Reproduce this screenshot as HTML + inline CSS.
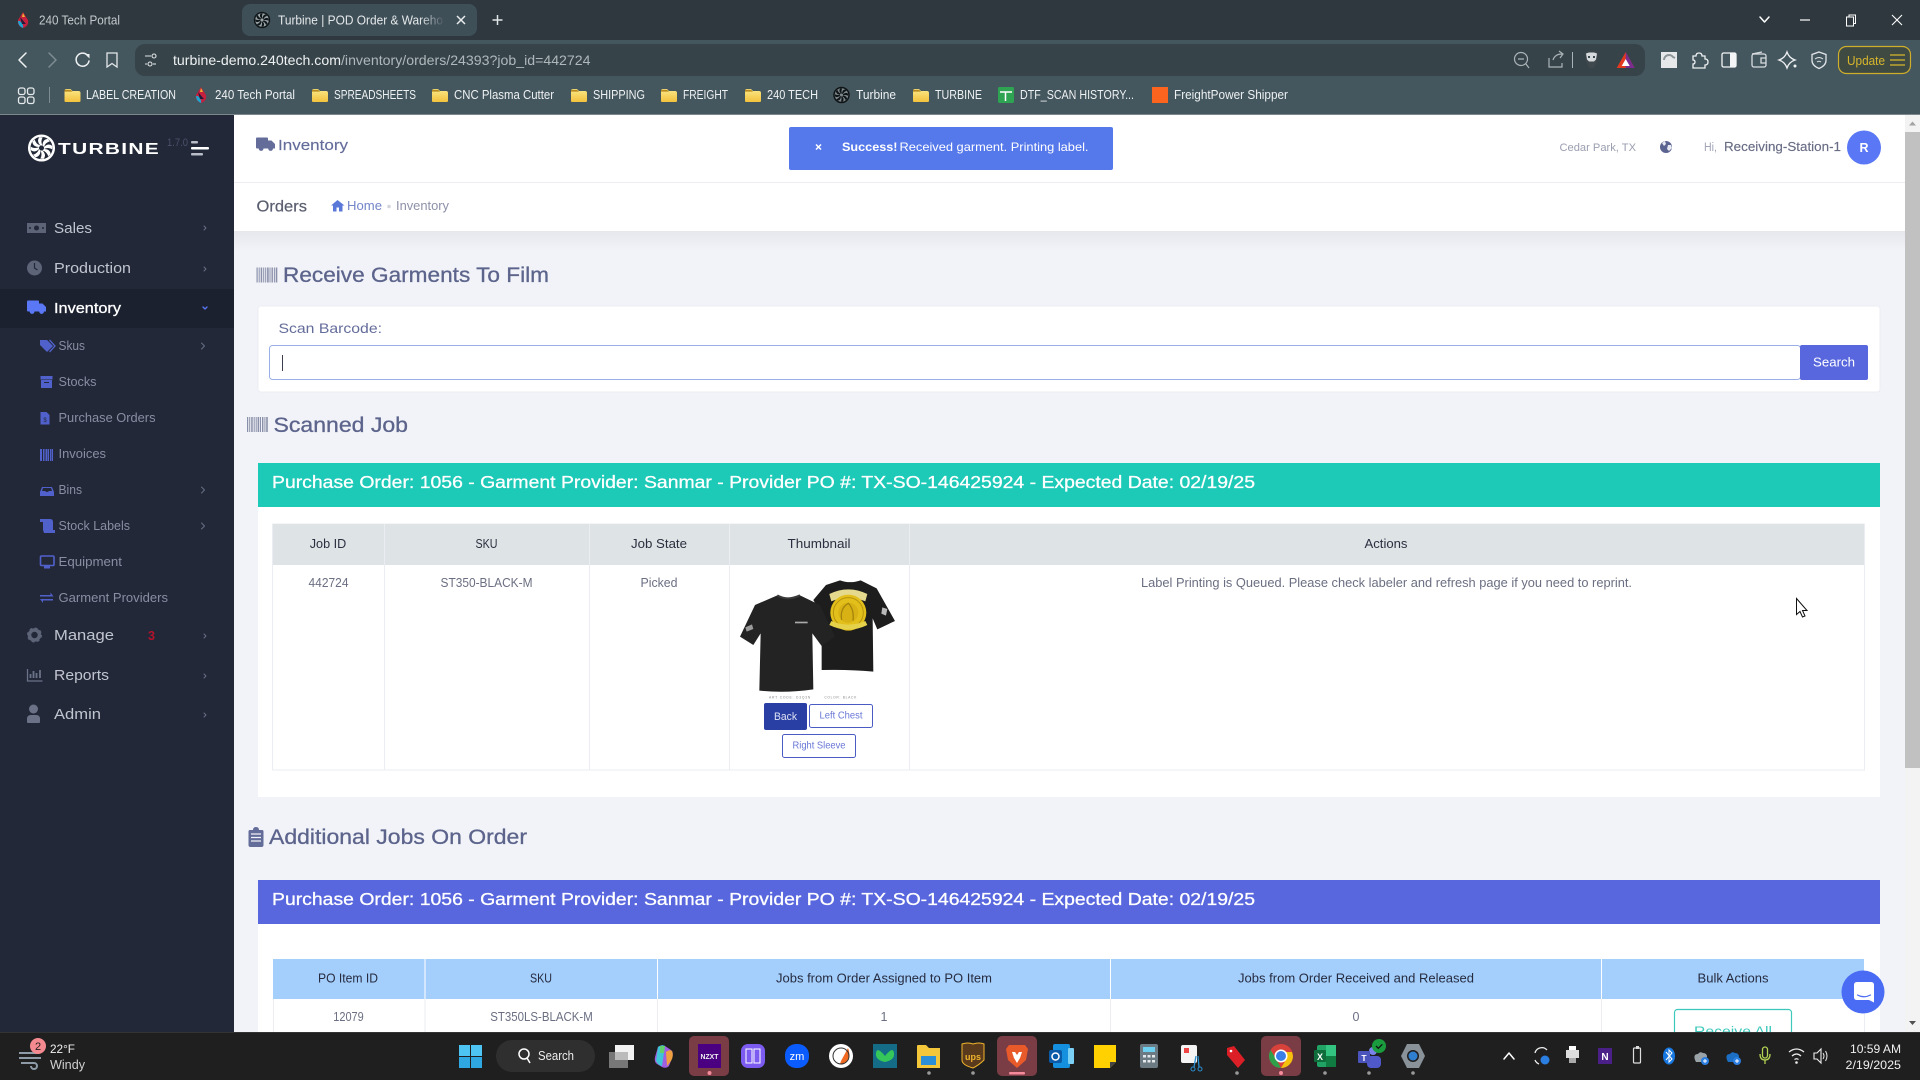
<!DOCTYPE html>
<html lang="en"><head><meta charset="utf-8"><title>Turbine | POD Order &amp; Warehouse</title>
<style>
html,body{margin:0;padding:0;width:1920px;height:1080px;overflow:hidden;background:#f2f3f8}
svg{display:block;position:absolute;left:0;top:0}
text{font-family:"Liberation Sans",sans-serif;white-space:pre}
.m{stroke:currentColor;stroke-width:.3px}
.n{fill:none;stroke-linecap:round;stroke-linejoin:round}
</style></head><body>
<svg width="1920" height="1080" viewBox="0 0 1920 1080" xmlns="http://www.w3.org/2000/svg">
<defs>
<linearGradient id="sh" x1="0" y1="0" x2="0" y2="1"><stop offset="0" stop-color="#e6e7ec"/><stop offset="1" stop-color="#f2f3f8"/></linearGradient>
<linearGradient id="fade" x1="0" y1="0" x2="1" y2="0"><stop offset="0" stop-color="#3f4f57" stop-opacity="0"/><stop offset="1" stop-color="#3f4f57"/></linearGradient>
<linearGradient id="fo" x1="0" y1="0" x2="0" y2="1"><stop offset="0" stop-color="#fbe88a"/><stop offset="1" stop-color="#f3c23c"/></linearGradient>
<g id="folder"><path d="M0 2q0-2 2-2h4l2 2h6q2 0 2 2v8q0 1-2 1H1q-1 0-1-1z" fill="url(#fo)"/><path d="M0 0.8h6l2 1.8H0z" fill="#b68a1f"/></g>
<g id="fan"><circle r="6" fill="none" stroke="currentColor" stroke-width="1.2"/><g fill="currentColor"><path id="bl" d="M-.5-1.2Q-2.600-3.400-1-5.300L.6-5.200Q-.6-3.300.5-1.200z"/><use href="#bl" transform="rotate(45)"/><use href="#bl" transform="rotate(90)"/><use href="#bl" transform="rotate(135)"/><use href="#bl" transform="rotate(180)"/><use href="#bl" transform="rotate(225)"/><use href="#bl" transform="rotate(270)"/><use href="#bl" transform="rotate(315)"/></g></g>
<g id="drop"><path d="M6 0Q9 5 11 8Q12 14 6 16Q0 14 1 8Q3 5 6 0z" fill="#c5213e"/><path d="M1 9Q1 14 6 16Q7 13 3 9z" fill="#1aa6d0"/><path d="M3 5L9 12L5 12z" fill="#241a3a"/><path d="M6 1L8 5L5 5z" fill="#f0b030"/></g>
<g id="bc" fill="currentColor"><rect x="0" width="1.2" height="15"/><rect x="2.2" width="1" height="15"/><rect x="4.2" width="1.5" height="15"/><rect x="6.7" width="1" height="15"/><rect x="8.7" width="1" height="15"/><rect x="10.6" width="1.6" height="15"/><rect x="13" width="1" height="15"/><rect x="15" width="1.4" height="15"/><rect x="17.4" width="1" height="15"/><rect x="19.2" width="1.6" height="15"/></g>
<g id="chev"><path d="M-1.500-3L1.500 0L-1.500 3" class="n" stroke="currentColor" stroke-width="1"/></g>
<g id="chevs"><path d="M-1-2L1 0L-1 2" class="n" stroke="currentColor" stroke-width="1"/></g>
<path id="truck" d="M0 1q0-1 1-1h10q1 0 1 1v2h3.500l3.500 3.500V11h-2a2.400 2.400 0 0 1-4.800 0H7.500a2.400 2.400 0 0 1-4.800 0H1q-1 0-1-1z"/>
</defs>

<!-- browser chrome -->
<rect width="1920" height="40" fill="#2e383e"/>
<rect y="40" width="1920" height="75" fill="#44565e"/>
<rect y="114" width="1920" height="1" fill="#7d888d"/>
<rect x="135" y="44" width="1510" height="32" rx="10" fill="#364349"/>
<rect x="242" y="4" width="235" height="32" rx="8" fill="#3f4f57"/>
<use href="#drop" transform="translate(17,12)"/>
<text x="39" y="24.500" font-size="12.500" fill="#c4cbce" textLength="81" lengthAdjust="spacingAndGlyphs">240 Tech Portal</text>
<g transform="translate(262,20) scale(1.25)" color="#10171a"><circle r="6.500" fill="#9aa4a8"/><use href="#fan"/></g>
<text x="278" y="24.500" font-size="12.500" fill="#e4e8ea" textLength="165" lengthAdjust="spacingAndGlyphs">Turbine | POD Order &amp; Wareho</text>
<rect x="420" y="10" width="25" height="20" fill="url(#fade)"/>
<path d="M457 16l8 8M465 16l-8 8" stroke="#e8ecee" stroke-width="1.500"/>
<path d="M497.500 15v10M492.500 20h10" stroke="#e0e5e7" stroke-width="1.500"/>
<path d="M1760 17l4.500 5 4.500-5" class="n" stroke="#fff" stroke-width="1.500"/>
<path d="M1800 20h10" stroke="#fff" stroke-width="1.200"/>
<rect x="1846.500" y="17" width="7" height="9" fill="none" stroke="#fff" stroke-width="1"/><path d="M1849 17v-2h6.500v8.500h-2" fill="none" stroke="#fff"/>
<path d="M1892 15l10 10M1902 15l-10 10" stroke="#fff" stroke-width="1.100"/>

<path d="M26 53l-7 7 7 7" class="n" stroke="#f0f2f3" stroke-width="1.500"/>
<path d="M49 53l7 7-7 7" class="n" stroke="#7f8d93" stroke-width="1.500"/>
<path d="M88 56a6.500 6.500 0 1 0 1 5" class="n" stroke="#eef1f2" stroke-width="1.500"/><path d="M85 54h4.500v4.500" fill="#eef1f2"/>
<path d="M107 53h10v14l-5-3.500-5 3.500z" fill="none" stroke="#e4e8ea" stroke-width="1.300"/>
<g fill="none" stroke="#dfe4e6" stroke-width="1.100"><path d="M145 56h6M145 64h2"/><circle cx="154" cy="56" r="2"/><circle cx="150" cy="64" r="2"/><path d="M153 64h3"/></g>
<text x="173" y="65" font-size="14" fill="#eef1f2" textLength="168" lengthAdjust="spacingAndGlyphs">turbine-demo.240tech.com</text>
<text x="341" y="65" font-size="14" fill="#aeb8bc" textLength="249.500" lengthAdjust="spacingAndGlyphs">/inventory/orders/24393?job_id=442724</text>

<g fill="none" stroke="#aab4b8" stroke-width="1.200"><circle cx="1521" cy="59" r="6.500"/><path d="M1518 59h6M1526 64l3 4"/><path d="M1549 58v9h13v-4M1553 60q2-6 9-6M1559 51l4 3-3 4"/></g>
<rect x="1572" y="52" width="1" height="16" fill="#aab4b8"/>
<path d="M1585 53l3-1.500h7l3 1.500-1 8-3 6.500h-5l-3-6.500z" fill="#3f484d"/><path d="M1586 53.500l3-1h5l3 1-1 6-2 2h-5l-2-2z" fill="#d6dadc"/><path d="M1588 56h2v2h-2zM1593 56h2v2h-2z" fill="#3b4a50"/>
<path d="M1625.700 52l9 16h-18z" fill="#e2391f"/><path d="M1625.700 52l9 16h-9z" fill="#7b2c8f"/><path d="M1625.700 59l4 7h-8z" fill="#fff"/>
<rect x="1661" y="52" width="16" height="16" fill="#e6e8e9"/><path d="M1664 60a5 5 0 0 1 9-3l2 1" fill="none" stroke="#8d9598" stroke-width="2"/>
<path d="M1693 56h3q0-3 3-3t3 3h3v3q3 0 3 3t-3 3v3h-12v-4q2 0 2-2t-2-2z" fill="none" stroke="#eef1f2" stroke-width="1.300"/>
<rect x="1722" y="53" width="14" height="14" rx="1.500" fill="none" stroke="#f3f5f6" stroke-width="1.300"/><rect x="1730" y="53" width="6" height="14" fill="#f3f5f6"/>
<rect x="1752" y="54" width="14" height="13" rx="2" fill="none" stroke="#d8dde0" stroke-width="1.300"/><path d="M1752 54l10-2M1766 58h-5v5h5" fill="none" stroke="#d8dde0" stroke-width="1.300"/>
<path d="M1787 52q2 6 8 8q-6 2-8 8q-2-6-8-8q6-2 8-8z" fill="none" stroke="#eef1f2" stroke-width="1.300"/><circle cx="1795" cy="66" r="1.500" fill="#eef1f2"/>
<path d="M1819 52l7 2.500v6q0 5-7 8q-7-3-7-8v-6z" fill="none" stroke="#e2e6e8" stroke-width="1.300"/><path d="M1815 59q4-3 8 0M1817 62q2-1.500 4 0" fill="none" stroke="#e2e6e8"/>
<rect x="1838.500" y="46.500" width="72" height="27" rx="8" fill="#3f4a43" stroke="#cfae2b" stroke-width="1.200"/>
<text x="1847" y="65" font-size="13" fill="#d8b62b" textLength="38" lengthAdjust="spacingAndGlyphs">Update</text>
<path d="M1890 55h15M1890 60h15M1890 65h15" stroke="#d8b62b" stroke-width="1.300"/>

<!-- bookmarks -->
<g fill="none" stroke="#e6eaec" stroke-width="1.300"><rect x="18.500" y="88" width="6.500" height="6.500" rx="2"/><rect x="27.500" y="88" width="6.500" height="6.500" rx="2"/><rect x="18.500" y="97" width="6.500" height="6.500" rx="2"/><rect x="27.500" y="97" width="6.500" height="6.500" rx="2"/></g>
<rect x="49" y="87" width="1" height="16" fill="#7f8d93"/>
<use href="#folder" transform="translate(64.500,89)"/><use href="#folder" transform="translate(312,89)"/><use href="#folder" transform="translate(432,89)"/><use href="#folder" transform="translate(571,89)"/><use href="#folder" transform="translate(661,89)"/><use href="#folder" transform="translate(745,89)"/><use href="#folder" transform="translate(913,89)"/>
<use href="#drop" transform="translate(195,87)"/>
<g font-size="12.500" fill="#eef1f2">
<text x="86" y="99" textLength="90" lengthAdjust="spacingAndGlyphs">LABEL CREATION</text>
<text x="215" y="99" textLength="80" lengthAdjust="spacingAndGlyphs">240 Tech Portal</text>
<text x="334" y="99" textLength="82" lengthAdjust="spacingAndGlyphs">SPREADSHEETS</text>
<text x="454" y="99" textLength="100" lengthAdjust="spacingAndGlyphs">CNC Plasma Cutter</text>
<text x="593" y="99" textLength="52" lengthAdjust="spacingAndGlyphs">SHIPPING</text>
<text x="683" y="99" textLength="45" lengthAdjust="spacingAndGlyphs">FREIGHT</text>
<text x="767" y="99" textLength="51" lengthAdjust="spacingAndGlyphs">240 TECH</text>
<text x="856" y="99" textLength="40" lengthAdjust="spacingAndGlyphs">Turbine</text>
<text x="935" y="99" textLength="47" lengthAdjust="spacingAndGlyphs">TURBINE</text>
<text x="1020" y="99" textLength="114" lengthAdjust="spacingAndGlyphs">DTF_SCAN HISTORY...</text>
<text x="1174" y="99" textLength="114" lengthAdjust="spacingAndGlyphs">FreightPower Shipper</text>
</g>
<g transform="translate(841.500,95) scale(1.250)" color="#0f1416"><circle r="6.500" fill="#7d888d"/><use href="#fan"/></g>
<rect x="998" y="87" width="16" height="16" rx="1.500" fill="#2ea352"/><path d="M1000 92h12M1005.500 92v9" stroke="#fff" stroke-width="1.500"/>
<rect x="1152" y="87" width="16" height="16" fill="#fb641e"/>

<!-- sidebar -->
<rect y="115" width="234" height="917" fill="#222838"/>
<rect y="289" width="234" height="39" fill="#1c2130"/>
<g transform="translate(41.500,148) scale(2.050)" color="#fff"><use href="#fan"/></g>
<text x="58" y="154" font-size="16" font-weight="700" fill="#fff" textLength="102" lengthAdjust="spacingAndGlyphs" letter-spacing="1">TURBINE</text>
<text x="167" y="146" font-size="11" fill="#4b5269" textLength="21" lengthAdjust="spacingAndGlyphs">1.7.0</text>
<rect x="191" y="141" width="7" height="2.500" rx="1" fill="#b9bdc8"/><rect x="191" y="147" width="18" height="2.500" rx="1" fill="#fff"/><rect x="191" y="153" width="12" height="2.500" rx="1" fill="#b9bdc8"/>

<rect x="27" y="223" width="19" height="10" fill="#5d6478"/><circle cx="36.500" cy="228" r="2.500" fill="#222838"/><circle cx="30" cy="228" r="1" fill="#222838"/><circle cx="43" cy="228" r="1" fill="#222838"/>
<circle cx="34.500" cy="268" r="7.500" fill="#5d6478"/><path d="M34.500 263v5l3 2" fill="none" stroke="#222838" stroke-width="1.200"/>
<use href="#truck" transform="translate(27,300.500)" fill="#5a78f5"/>
<circle cx="34.500" cy="635" r="5" fill="none" stroke="#5d6478" stroke-width="3.500"/><circle cx="34.500" cy="635" r="6.300" fill="none" stroke="#5d6478" stroke-width="2.400" stroke-dasharray="2.600 2.350"/>
<path d="M27.500 669v12h15" fill="none" stroke="#6b7287" stroke-width="1.300"/><path d="M30.500 678v-4M33.500 678v-7M36.500 678v-5M40 678v-8" stroke="#6b7287" stroke-width="1.800"/>
<circle cx="33.500" cy="709" r="4.500" fill="#6b7287"/><path d="M27 722v-3q0-4 4-4h5q4 0 4 4v3q0 1-1 1H28q-1 0-1-1z" fill="#6b7287"/>

<g font-size="15">
<text x="54" y="233" fill="#c1c5d0" textLength="38" lengthAdjust="spacingAndGlyphs">Sales</text>
<text x="54" y="273" fill="#c1c5d0" textLength="77" lengthAdjust="spacingAndGlyphs">Production</text>
<text x="54" y="313" fill="#fff" class="m" textLength="67" lengthAdjust="spacingAndGlyphs" style="color:#fff">Inventory</text>
<text x="54" y="640" fill="#c1c5d0" textLength="60" lengthAdjust="spacingAndGlyphs">Manage</text>
<text x="148" y="640" fill="#b5122c" font-weight="700" font-size="13" textLength="7" lengthAdjust="spacingAndGlyphs">3</text>
<text x="54" y="680" fill="#c1c5d0" textLength="55" lengthAdjust="spacingAndGlyphs">Reports</text>
<text x="54" y="719" fill="#c1c5d0" textLength="47" lengthAdjust="spacingAndGlyphs">Admin</text>
</g>
<g font-size="12.500" fill="#898ea2">
<text x="58.500" y="350" textLength="26.500" lengthAdjust="spacingAndGlyphs">Skus</text>
<text x="58.500" y="386" textLength="38" lengthAdjust="spacingAndGlyphs">Stocks</text>
<text x="58.500" y="422" textLength="97" lengthAdjust="spacingAndGlyphs">Purchase Orders</text>
<text x="58.500" y="458" textLength="47.500" lengthAdjust="spacingAndGlyphs">Invoices</text>
<text x="58.500" y="494" textLength="23.500" lengthAdjust="spacingAndGlyphs">Bins</text>
<text x="58.500" y="530" textLength="71.500" lengthAdjust="spacingAndGlyphs">Stock Labels</text>
<text x="58.500" y="566" textLength="63.500" lengthAdjust="spacingAndGlyphs">Equipment</text>
<text x="58.500" y="602" textLength="109.500" lengthAdjust="spacingAndGlyphs">Garment Providers</text>
</g>
<g fill="#5161cc">
<path d="M40 340h7l6 6-6 6-7-7z"/><path d="M49.500 340l5.500 6-5.500 6" fill="none" stroke="#5161cc" stroke-width="1.300"/>
<rect x="40.500" y="376" width="12" height="3.500"/><rect x="41" y="380" width="11" height="8"/><rect x="44" y="382" width="5" height="1" fill="#222838"/>
<path d="M40.500 412h6l3 3v9.500h-9z"/><text x="45" y="422" font-size="6" fill="#222838" text-anchor="middle">$</text>
<rect x="40" y="449" width="2" height="12"/><rect x="43" y="449" width="1.500" height="12"/><rect x="45.500" y="449" width="2" height="12"/><rect x="48" y="449" width="1" height="12"/><rect x="50" y="449" width="1.500" height="12"/><rect x="52" y="449" width="1" height="12"/>
<path d="M40 492l2-5h10l2 5v4H40z"/><path d="M43 488h8l1 3h-3q-2 2-4 0h-3z" fill="#222838"/>
<path d="M40 519h10q3 0 3 3v8h2v3H44l-1-3v-8h-3z"/>
<rect x="40.500" y="556" width="13.500" height="9.500" rx="1" fill="none" stroke="#5161cc" stroke-width="1.600"/><rect x="44" y="566" width="6" height="2.500"/>
<path d="M40 595h10.500v-2.500l3 4h-13.500zM53 600.500H43v2.500l-3-4h13z"/>
</g>
<g color="#6a7085"><use href="#chevs" transform="translate(205,228)"/><use href="#chevs" transform="translate(205,269)"/><use href="#chev" transform="translate(203,346)"/><use href="#chev" transform="translate(203,490)"/><use href="#chev" transform="translate(203,526)"/><use href="#chevs" transform="translate(205,636)"/><use href="#chevs" transform="translate(205,676)"/><use href="#chevs" transform="translate(205,715)"/></g>
<path d="M203 307l2 2 2-2" class="n" stroke="#5a78f5" stroke-width="1.300"/>

<!-- page header -->
<rect x="234" y="115" width="1671" height="116" fill="#fff"/>
<rect x="234" y="182" width="1671" height="1" fill="#ebedf2"/>
<rect x="234" y="231" width="1671" height="20" fill="url(#sh)"/>
<use href="#truck" transform="translate(256,137.500)" fill="#646c9a"/>
<text x="278" y="150" font-size="15" fill="#646c9a" textLength="70" lengthAdjust="spacingAndGlyphs" class="m" style="color:#646c9a;stroke-width:.15">Inventory</text>
<text x="256.500" y="211.500" font-size="16" fill="#595d6e" textLength="50.500" lengthAdjust="spacingAndGlyphs" class="m" style="color:#595d6e;stroke-width:.2">Orders</text>
<path d="M337.500 200l-6.500 5.500h2v6h3.500v-4h2.500v4h3.500v-6h2z" fill="#5a78d8"/>
<text x="347" y="210" font-size="12.500" fill="#7485c9" textLength="35" lengthAdjust="spacingAndGlyphs">Home</text>
<circle cx="389" cy="206.500" r="1.800" fill="#d3d5dd"/>
<text x="396" y="210" font-size="12.500" fill="#8d91a8" textLength="53" lengthAdjust="spacingAndGlyphs">Inventory</text>

<!-- alert -->
<rect x="789" y="127" width="324" height="43" rx="2" fill="#5578eb"/>
<path d="M816 144.500l5 5M821 144.500l-5 5" stroke="#fff" stroke-width="1.500"/>
<text x="842" y="151" font-size="12" font-weight="700" fill="#fff" textLength="55.500" lengthAdjust="spacingAndGlyphs">Success!</text>
<text x="899.500" y="151" font-size="12" fill="#fff" textLength="189" lengthAdjust="spacingAndGlyphs">Received garment. Printing label.</text>

<!-- top right -->
<text x="1559.500" y="151" font-size="11" fill="#9a9eb0" textLength="76.500" lengthAdjust="spacingAndGlyphs">Cedar Park, TX</text>
<circle cx="1666" cy="147" r="6" fill="#5b6390"/><path d="M1662 143l3-2 1 3-2 2zM1668 145l3 0 1 3-3 3-2-2z" fill="#e8eaf2"/>
<text x="1704" y="151" font-size="11.500" fill="#a0a4b6" textLength="13" lengthAdjust="spacingAndGlyphs">Hi,</text>
<text x="1724" y="151" font-size="13" fill="#686c85" textLength="117" lengthAdjust="spacingAndGlyphs" class="m" style="color:#686c85;stroke-width:.15">Receiving-Station-1</text>
<circle cx="1864" cy="147.500" r="17" fill="#5a78f5"/>
<text x="1864" y="152" font-size="12.500" font-weight="700" fill="#fff" text-anchor="middle">R</text>

<!-- receive -->
<use href="#bc" transform="translate(256.500,267.500)" color="#8b90aa"/>
<text x="283" y="282" font-size="21" fill="#5c648c" textLength="266" lengthAdjust="spacingAndGlyphs" class="m" style="color:#5c648c">Receive Garments To Film</text>
<rect x="258" y="306" width="1622" height="86" rx="3" fill="#fff" stroke="#eceef3"/>
<text x="278.500" y="333" font-size="14" fill="#646c9a" textLength="103.500" lengthAdjust="spacingAndGlyphs">Scan Barcode:</text>
<rect x="269.500" y="345.500" width="1531" height="34" rx="3" fill="#fff" stroke="#9aaee8"/>
<rect x="282" y="355" width="1" height="16" fill="#3a3e4d"/>
<rect x="1800" y="345" width="68" height="35" rx="2" fill="#5867dd"/>
<text x="1834" y="366.500" font-size="12.500" fill="#fff" text-anchor="middle" textLength="42" lengthAdjust="spacingAndGlyphs">Search</text>

<use href="#bc" transform="translate(247,417)" color="#8b90aa"/>
<text x="273.500" y="432" font-size="21" fill="#5c648c" textLength="134.500" lengthAdjust="spacingAndGlyphs" class="m" style="color:#5c648c">Scanned Job</text>

<!-- scanned card -->
<rect x="258" y="463" width="1622" height="334" fill="#fff"/>
<rect x="258" y="463" width="1622" height="44" fill="#1dc9b7"/>
<text x="272" y="488" font-size="17.500" fill="#fff" textLength="983" lengthAdjust="spacingAndGlyphs" class="m" style="color:#fff">Purchase Order: 1056 - Garment Provider: Sanmar - Provider PO #: TX-SO-146425924 - Expected Date: 02/19/25</text>

<rect x="272.500" y="524" width="1592" height="246" fill="#fff" stroke="#ebedf2"/>
<rect x="273" y="524" width="1591" height="41" fill="#dee3e6"/>
<g fill="#ebedf2"><rect x="384" y="524" width="1" height="246"/><rect x="589" y="524" width="1" height="246"/><rect x="729" y="524" width="1" height="246"/><rect x="909" y="524" width="1" height="246"/></g>
<g font-size="12.500" fill="#2b2f3f" text-anchor="middle">
<text x="328" y="548" textLength="36.500" lengthAdjust="spacingAndGlyphs">Job ID</text>
<text x="486.500" y="548" textLength="22" lengthAdjust="spacingAndGlyphs">SKU</text>
<text x="659" y="548" textLength="56" lengthAdjust="spacingAndGlyphs">Job State</text>
<text x="819" y="548" textLength="63" lengthAdjust="spacingAndGlyphs">Thumbnail</text>
<text x="1386" y="548" textLength="43" lengthAdjust="spacingAndGlyphs">Actions</text>
</g>
<g font-size="12.500" fill="#6b6f82" text-anchor="middle">
<text x="328.500" y="587" textLength="40" lengthAdjust="spacingAndGlyphs">442724</text>
<text x="486.500" y="587" textLength="92" lengthAdjust="spacingAndGlyphs">ST350-BLACK-M</text>
<text x="659" y="587" textLength="37" lengthAdjust="spacingAndGlyphs">Picked</text>
<text x="1386.500" y="587" textLength="491" lengthAdjust="spacingAndGlyphs">Label Printing is Queued. Please check labeler and refresh page if you need to reprint.</text>
</g>

<!-- shirts -->
<g transform="translate(700,520) scale(.3333)">
<path d="M340 240L378 195L420 181Q450 192 482 181L530 205L585 303L532 328L518 295L520 455Q450 448 365 450L365 360L400 345z" fill="#1d1d1d"/>
<path d="M388 222q57-28 114 0l-6 22q-51-20-102 0z" fill="#e4d98c"/>
<circle cx="445" cy="278" r="54" fill="#e2bf1a"/><circle cx="445" cy="278" r="45" fill="none" stroke="#b8930f" stroke-width="3"/><circle cx="445" cy="278" r="30" fill="#d8b214"/><path d="M425 300q-6-35 20-50 18 18 14 52" fill="none" stroke="#a5840c" stroke-width="4"/>
<path d="M388 315q57 28 114 0l-6-12q-51 22-102 0z" fill="#e6d24a"/>
<path d="M547 262l15 5-4 20-14-6z" fill="#b9b9b9"/>
<path d="M120 350L165 255L232 226Q262 244 300 226L360 255L405 350L365 378L337 340L340 508Q260 520 178 512L182 340L160 375z" fill="#232323"/>
<path d="M232 226Q262 244 300 226" fill="none" stroke="#3a3a3a" stroke-width="6"/>
<rect x="285" y="305" width="38" height="5" fill="#aaa"/>
<path d="M136 322l20-9 4 14-20 8z" fill="#9b9b9b"/>
<text x="207" y="536" font-size="10" fill="#8a8a8a" textLength="124">ART CODE: D3Q3N</text>
<text x="373" y="536" font-size="10" fill="#8a8a8a" textLength="96">COLOR: BLACK</text>
</g>
<rect x="764" y="703" width="43" height="27" rx="2" fill="#2a3fa3"/>
<text x="785.500" y="720" font-size="11" fill="#dfe3f5" text-anchor="middle" textLength="23" lengthAdjust="spacingAndGlyphs">Back</text>
<rect x="809.500" y="704.500" width="63" height="23" rx="2" fill="#fff" stroke="#4a5cc4"/>
<text x="841" y="718.500" font-size="10.500" fill="#6877d6" text-anchor="middle" textLength="43" lengthAdjust="spacingAndGlyphs">Left Chest</text>
<rect x="782.500" y="734.500" width="73" height="23" rx="2" fill="#fff" stroke="#4a5cc4"/>
<text x="819" y="748.500" font-size="10.500" fill="#6877d6" text-anchor="middle" textLength="53" lengthAdjust="spacingAndGlyphs">Right Sleeve</text>

<!-- additional -->
<path d="M250 830h3q0-3 3-3t3 3h3q1.500 0 1.500 1.500V845q0 2-2 2h-11q-2 0-2-2v-13.500q0-1.500 1.500-1.500z" fill="#646c9a"/>
<path d="M251 834h10M251 837.500h10M251 841h10" stroke="#f2f3f8" stroke-width="1.200"/>
<text x="269" y="844" font-size="21" fill="#5c648c" textLength="258" lengthAdjust="spacingAndGlyphs" class="m" style="color:#5c648c">Additional Jobs On Order</text>
<rect x="258" y="880" width="1622" height="152" fill="#fff"/>
<rect x="258" y="880" width="1622" height="44" fill="#5867dd"/>
<text x="272" y="905" font-size="17.500" fill="#fff" textLength="983" lengthAdjust="spacingAndGlyphs" class="m" style="color:#fff">Purchase Order: 1056 - Garment Provider: Sanmar - Provider PO #: TX-SO-146425924 - Expected Date: 02/19/25</text>
<rect x="273" y="959" width="1591" height="40" fill="#a4cffd"/>
<g fill="#fff"><rect x="424.500" y="959" width="1" height="40"/><rect x="657" y="959" width="1" height="40"/><rect x="1110" y="959" width="1" height="40"/><rect x="1601" y="959" width="1" height="40"/></g>
<g fill="#ebedf2"><rect x="424.500" y="999" width="1" height="33"/><rect x="657" y="999" width="1" height="33"/><rect x="1110" y="999" width="1" height="33"/><rect x="1601" y="999" width="1" height="33"/><rect x="1864" y="999" width="1" height="33"/><rect x="273" y="999" width="1" height="33"/></g>
<g font-size="12.500" fill="#262b3f" text-anchor="middle">
<text x="348" y="982.500" textLength="60" lengthAdjust="spacingAndGlyphs">PO Item ID</text>
<text x="541" y="982.500" textLength="22" lengthAdjust="spacingAndGlyphs">SKU</text>
<text x="884" y="982.500" textLength="216" lengthAdjust="spacingAndGlyphs">Jobs from Order Assigned to PO Item</text>
<text x="1356" y="982.500" textLength="236" lengthAdjust="spacingAndGlyphs">Jobs from Order Received and Released</text>
<text x="1733" y="982.500" textLength="71" lengthAdjust="spacingAndGlyphs">Bulk Actions</text>
</g>
<g font-size="12.500" fill="#6b6f82" text-anchor="middle">
<text x="348.500" y="1021" textLength="30.500" lengthAdjust="spacingAndGlyphs">12079</text>
<text x="541.500" y="1021" textLength="102.500" lengthAdjust="spacingAndGlyphs">ST350LS-BLACK-M</text>
<text x="884" y="1021">1</text>
<text x="1356" y="1021">0</text>
</g>
<rect x="1674.500" y="1009.500" width="117" height="40" rx="3" fill="#fff" stroke="#3cc8bb" stroke-width="1.200"/>
<text x="1733" y="1036" font-size="14" fill="#3cc8bb" text-anchor="middle" textLength="78" lengthAdjust="spacingAndGlyphs">Receive All</text>

<!-- chat bubble -->
<circle cx="1863" cy="992" r="21.500" fill="#4a6cf5"/>
<path d="M1857 982h14q3 0 3 3v17.500l-5-2.500h-12q-3 0-3-3v-12q0-3 3-3z" fill="#fff"/>
<path d="M1857.500 995q6 3.500 13 0" fill="none" stroke="#4a6cf5" stroke-width="1.200" stroke-linecap="round"/>

<!-- scrollbar -->
<rect x="1905" y="115" width="15" height="917" fill="#f3f3f3"/>
<rect x="1905" y="132" width="15" height="636" fill="#c1c1c1"/>
<path d="M1912.500 121.500l3.500 4h-7z" fill="#a3a3a3"/><path d="M1912.500 1025l3.500-4h-7z" fill="#505050"/>

<!-- cursor -->
<path d="M1796.500 598.500v16l3.500-3 2.500 5.500 2.500-1-2.500-5.500h4.500z" fill="#fff" stroke="#111" stroke-width="1"/>

<!-- taskbar -->
<rect y="1032" width="1920" height="48" fill="#1f1f1f"/>
<rect y="1032" width="1920" height="1" fill="#333"/>
<path d="M19 1053h18a3 3 0 1 0-3-3M19 1058h22M21 1063h13a3 3 0 1 1-3 3" fill="none" stroke="#8e9aa6" stroke-width="2"/>
<circle cx="38" cy="1046" r="8" fill="#f48a8f"/>
<text x="38" y="1050" font-size="11" fill="#222" text-anchor="middle">2</text>
<text x="50" y="1053" font-size="12" fill="#f0f0f0" textLength="25" lengthAdjust="spacingAndGlyphs">22°F</text>
<text x="50" y="1069" font-size="12.500" fill="#d0d0d0" textLength="35" lengthAdjust="spacingAndGlyphs">Windy</text>

<g fill="#4dc4f2"><rect x="459" y="1045" width="11" height="11"/><rect x="471" y="1045" width="11" height="11"/><rect x="459" y="1057" width="11" height="11" fill="#2fa7e0"/><rect x="471" y="1057" width="11" height="11" fill="#2fa7e0"/></g>
<rect x="496" y="1040" width="99" height="32" rx="16" fill="#2f2f2f"/>
<circle cx="524" cy="1054" r="5" fill="none" stroke="#fff" stroke-width="1.500"/><path d="M527 1058l3 5" stroke="#fff" stroke-width="1.500"/>
<text x="538" y="1060" font-size="12.500" fill="#eee" textLength="36" lengthAdjust="spacingAndGlyphs">Search</text>
<rect x="615" y="1045" width="19" height="15" fill="#f2f2f2"/><rect x="609" y="1052" width="19" height="16" fill="#777"/><rect x="615" y="1052" width="13" height="8" fill="#bbb"/>
<path d="M658 1047q4-3 7-1l6 4q3 2 1 8l-3 8q-3 3-7 1l-5-3q-3-2-2-7z" fill="#a05ee0"/><path d="M658 1047q4-3 7-1l-3 20q-4-1-6-5z" fill="#3ec6d8"/><path d="M666 1052q4-3 6-1 2 5-1 10l-4 5z" fill="#f0a040"/><path d="M660 1046l5 0-1 7-4 0z" fill="#5fcf70"/>
<rect x="689" y="1036" width="40" height="40" rx="5" fill="#7a3d45"/><rect x="698" y="1044" width="23" height="24" fill="#4b0082"/>
<text x="709.500" y="1059" font-size="7.500" font-weight="700" fill="#eee" text-anchor="middle" textLength="18" lengthAdjust="spacingAndGlyphs">NZXT</text>
<circle cx="709.500" cy="1073" r="2" fill="#f48a9a"/>
<rect x="741" y="1044" width="24" height="24" rx="7" fill="#7c5cf0"/><path d="M746 1049h6v14h-6zM754 1049h6v14h-6z" fill="none" stroke="#fff" stroke-width="1"/>
<rect x="785" y="1044" width="24" height="24" rx="11" fill="#0b5cff"/><text x="797" y="1060" font-size="11" fill="#fff" text-anchor="middle">zm</text>
<circle cx="841" cy="1056" r="12" fill="#fff"/><path d="M841 1061l7-13q3 6-1 13-4 5-7 3z" fill="#f26a21"/><circle cx="841" cy="1056" r="8" fill="none" stroke="#333"/>
<rect x="873" y="1044" width="24" height="24" fill="#146c86"/><path d="M885 1056q-8-10-9-3t9 9q10-2 9-9t-9 3z" fill="#36c75a"/>
<path d="M917 1046q0-1 1-1h8l3 3h11v20h-23z" fill="#f4c63a"/><rect x="921" y="1056" width="15" height="9" fill="#2b8fd8"/>
<circle cx="929" cy="1073" r="1.800" fill="#9a9a9a"/>

<path d="M973 1044q6-2 11 0v16q-5 5-11 8-11-3-11-8v-16q6-2 11 0z" fill="#5a3a1c" stroke="#f0b42c" stroke-width="1"/><text x="973" y="1060" font-size="9" font-weight="700" fill="#f0b42c" text-anchor="middle">ups</text><circle cx="973" cy="1073" r="1.800" fill="#9a9a9a"/>
<rect x="997" y="1036" width="40" height="40" rx="5" fill="#7a3d45"/>
<path d="M1009 1045h16l3 4-2 11-9 8-9-8-2-11z" fill="#e85a2a"/><path d="M1012 1052h3l2 3 2-3h3l-2 6-3 5-3-5z" fill="#fff"/><rect x="1009" y="1072" width="16" height="2.500" rx="1" fill="#f48a9a"/>
<rect x="1053" y="1044" width="17" height="24" rx="2" fill="#1490df"/><rect x="1068" y="1048" width="6" height="16" rx="1" fill="#7ad0f5"/><rect x="1049" y="1050" width="13" height="13" rx="2" fill="#0a5ca8"/><circle cx="1055.500" cy="1056.500" r="3.500" fill="none" stroke="#fff" stroke-width="1.500"/>
<path d="M1094 1045h22v17l-6 6h-16z" fill="#ffd100"/><path d="M1116 1062l-6 6v-6z" fill="#444"/>
<rect x="1140" y="1044" width="18" height="24" rx="2" fill="#6c7a84"/><rect x="1143" y="1047" width="12" height="5" fill="#6ed0ee"/><g fill="#e4e8ea"><rect x="1143" y="1055" width="3" height="2.500"/><rect x="1147.500" y="1055" width="3" height="2.500"/><rect x="1152" y="1055" width="3" height="2.500"/><rect x="1143" y="1060" width="3" height="2.500"/><rect x="1147.500" y="1060" width="3" height="2.500"/><rect x="1152" y="1060" width="3" height="2.500"/></g>
<rect x="1181" y="1045" width="16" height="18" rx="2" fill="#f4f4f4"/><rect x="1184" y="1048" width="5" height="5" fill="#e44"/><path d="M1196 1056l-2 11M1198 1056l1 11" stroke="#2a8fd0" stroke-width="1.300"/><circle cx="1193" cy="1069" r="2" fill="none" stroke="#2a8fd0"/><circle cx="1200" cy="1069" r="2" fill="none" stroke="#2a8fd0"/>
<path d="M1227 1048l7-2 11 14-7 8-11-13z" fill="#dc1f26"/><circle cx="1231" cy="1051" r="1.300" fill="#fff"/><circle cx="1237" cy="1073" r="1.800" fill="#9a9a9a"/>
<rect x="1261" y="1036" width="40" height="40" rx="5" fill="#7a3d45"/>
<circle cx="1281" cy="1056" r="12" fill="#d9423a"/><path d="M1281 1068a12 12 0 0 1-10.400-18l6 10z" fill="#2f9f4a"/><path d="M1293 1056a12 12 0 0 1-12 12l6-10-1-6h6z" fill="#f4c20d"/><circle cx="1281" cy="1056" r="6.500" fill="#fff"/><circle cx="1281" cy="1056" r="5" fill="#3a7ee8"/><circle cx="1281" cy="1073" r="2" fill="#f48a9a"/>
<rect x="1317" y="1045" width="19" height="22" rx="2" fill="#21a366"/><rect x="1326" y="1045" width="10" height="11" fill="#33c481"/><rect x="1326" y="1056" width="10" height="11" fill="#107c41"/><rect x="1314" y="1050" width="12" height="12" rx="1" fill="#0e6d3a"/><text x="1320" y="1060" font-size="9" font-weight="700" fill="#fff" text-anchor="middle">X</text><circle cx="1325" cy="1073" r="1.800" fill="#9a9a9a"/>
<circle cx="1373" cy="1051" r="4" fill="#7b83eb"/><rect x="1367" y="1056" width="14" height="12" rx="4" fill="#5059c9"/><rect x="1358" y="1051" width="12" height="12" rx="1" fill="#4b53bc"/><text x="1364" y="1061" font-size="8.500" font-weight="700" fill="#fff" text-anchor="middle">T</text><circle cx="1379" cy="1046" r="7" fill="#1a9c3e"/><path d="M1376 1046l2.300 2.300 4-4" fill="none" stroke="#111" stroke-width="1.300"/><circle cx="1369" cy="1073" r="1.800" fill="#9a9a9a"/>
<path d="M1407 1044h12l6 12-6 12h-12l-6-12z" fill="#8a9299"/><circle cx="1413" cy="1056" r="6" fill="#1f1f1f"/><circle cx="1413" cy="1056" r="4.500" fill="#2f7fd0"/><circle cx="1413" cy="1073" r="1.800" fill="#9a9a9a"/>

<path d="M1504 1059l5-6 5 6" class="n" stroke="#fff" stroke-width="1.500"/>
<path d="M1547 1050a7 7 0 0 0-12 3M1535 1060a7 7 0 0 0 4 4" fill="none" stroke="#eee" stroke-width="1.300"/><circle cx="1545" cy="1060" r="4.500" fill="#2a7fe0"/>
<rect x="1566" y="1050" width="13" height="8" fill="#ddd"/><rect x="1569" y="1046" width="7" height="4" fill="#fff"/><rect x="1569" y="1058" width="7" height="5" fill="#aaa"/>
<rect x="1598" y="1048" width="14" height="16" fill="#4b1f88"/><text x="1605" y="1060" font-size="10" font-weight="700" fill="#fff" text-anchor="middle">N</text>
<rect x="1633.500" y="1048" width="7" height="15" rx="1" fill="none" stroke="#ddd" stroke-width="1.200"/><path d="M1636 1046h3v3h-3z" fill="#ddd"/>
<ellipse cx="1669" cy="1056" rx="6" ry="8.500" fill="#1677e0"/><path d="M1666 1052l6 7-3 3v-12l3 3-6 7" fill="none" stroke="#fff"/>
<path d="M1695 1060q-2-6 3-6 2-3 5-1 4 0 4 4l-2 5h-9z" fill="#9aa3a8"/><circle cx="1705" cy="1061" r="4" fill="#2a7fe0"/><path d="M1703 1061h4M1705 1059v4" stroke="#fff"/>
<path d="M1727 1060q-2-6 3-6 2-3 5-1 4 0 4 4l-2 5h-9z" fill="#1d6fc4"/><circle cx="1737" cy="1061" r="4" fill="#2a7fe0"/><path d="M1735 1061h4M1737 1059v4" stroke="#fff"/>
<rect x="1762.500" y="1047" width="5" height="11" rx="2.500" fill="none" stroke="#b4d454" stroke-width="1.300"/><path d="M1760 1054q0 6 5 6t5-6M1765 1060v4" fill="none" stroke="#b4d454" stroke-width="1.300"/>
<path d="M1789 1052q7.500-6 15 0M1792 1056q4.500-4 9 0M1794.500 1059.500q2-1.500 4 0" fill="none" stroke="#eee" stroke-width="1.300"/><circle cx="1796.500" cy="1062.500" r="1.300" fill="#eee"/>
<path d="M1814 1053h3l4-4v14l-4-4h-3z" fill="none" stroke="#eee" stroke-width="1.100"/><path d="M1823 1053q2 3 0 6M1825.500 1051q3 5 0 10" fill="none" stroke="#eee"/>
<text x="1850" y="1053" font-size="12" fill="#f0f0f0" textLength="51" lengthAdjust="spacingAndGlyphs">10:59 AM</text>
<text x="1845.500" y="1069" font-size="12" fill="#f0f0f0" textLength="55.500" lengthAdjust="spacingAndGlyphs">2/19/2025</text>
</svg>
</body></html>
